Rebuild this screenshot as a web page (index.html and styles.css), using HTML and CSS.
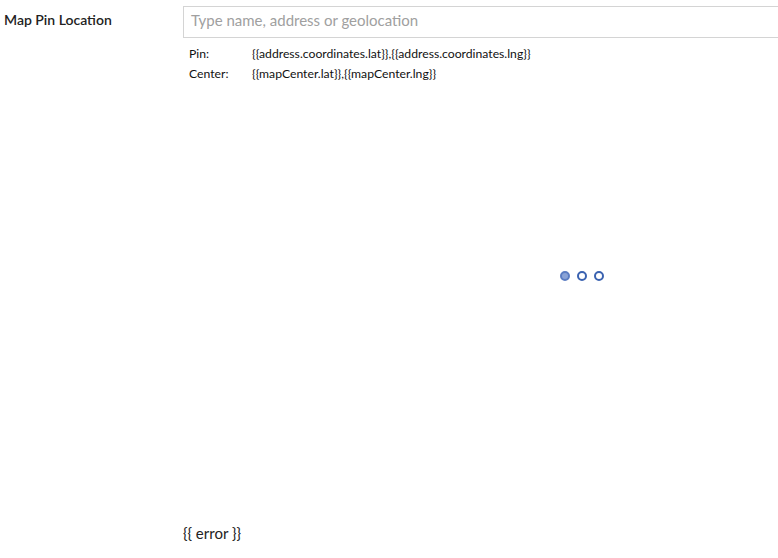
FILE: index.html
```html
<!DOCTYPE html>
<html>
<head>
<meta charset="utf-8">
<link rel="stylesheet" href="styles.css">
</head>
<body>
<div class="row">
  <label class="label">Map Pin Location</label>
  <div class="field">
    <div class="input">Type name, address or geolocation</div>
    <div class="coords">
      <span class="k">Pin:</span><span class="v">{{address.coordinates.lat}},{{address.coordinates.lng}}</span>
      <span class="k">Center:</span><span class="v">{{mapCenter.lat}},{{mapCenter.lng}}</span>
    </div>
    <div class="map">
      <div class="dots"><span class="dot first"></span><span class="dot"></span><span class="dot"></span></div>
    </div>
    <div class="error">{{ error }}</div>
  </div>
</div>
</body>
</html>
```
FILE: styles.css
```css
html, body { margin: 0; padding: 0; background: #fff; overflow: hidden; }
body { font-family: Lato, "Open Sans", sans-serif; color: #222; width: 778px; height: 558px; }
.row { display: flex; padding: 6px 0 0 4px; }
.label { width: 179px; flex: none; font-size: 14px; font-weight: 600; color: #222; padding-top: 6px; line-height: 16px; }
.field { width: 798px; flex: none; }
.input { box-sizing: border-box; height: 32px; border: 1px solid #d4d4d4; padding: 0 7px 2px; font-size: 15px; line-height: 26px; color: #a0a0a0; }
.coords { display: grid; grid-template-columns: 63px auto; justify-content: start; padding: 6px 0 0 6px; font-size: 12.2px; line-height: 20px; color: #111; }
.map { height: 404px; display: flex; align-items: center; justify-content: center; margin-top: -10px; }
.dots { display: flex; gap: 7px; }
.dot { width: 6px; height: 6px; border: 2px solid #3a62b0; border-radius: 50%; }
.dot.first { background: #8aa3d6; border-color: #5b7dc2; }
.error { font-size: 15px; color: #222; line-height: 18px; margin-top: 46px; }
```
